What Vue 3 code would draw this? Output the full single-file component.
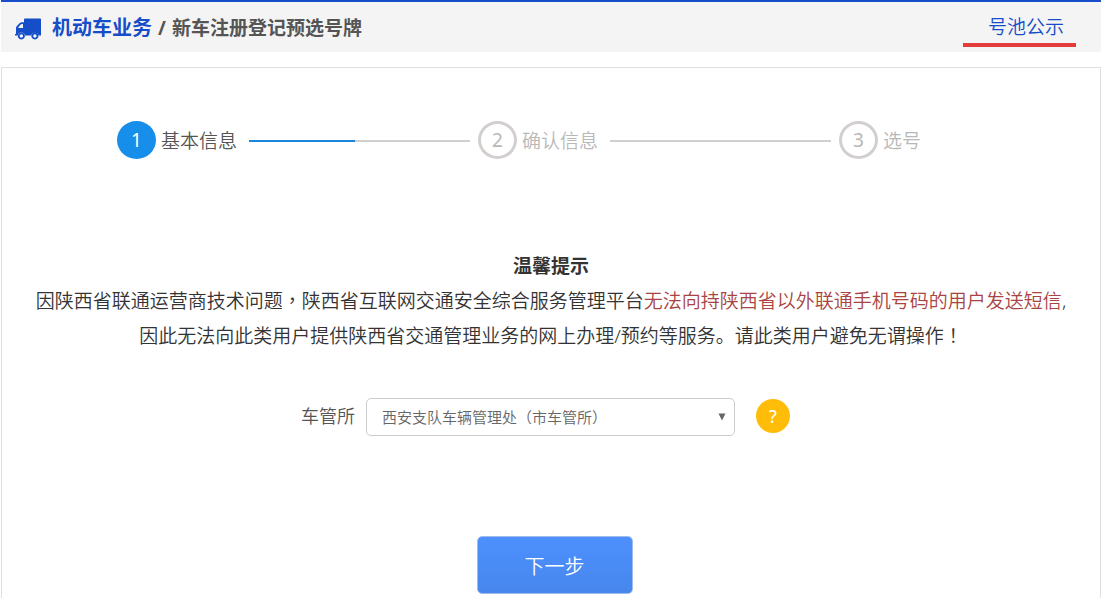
<script setup>
import { ref } from 'vue'

const steps = [
  { no: 1, label: '基本信息', active: true },
  { no: 2, label: '确认信息', active: false },
  { no: 3, label: '选号', active: false },
]
const offices = ['西安支队车辆管理处\uFF08市车管所\uFF09']
const office = ref(offices[0])
</script>

<template>
  <div class="page" lang="zh-CN">
    <header class="bar">
      <svg class="truck" viewBox="0 0 27 22" aria-hidden="true">
        <path fill-rule="evenodd" d="M10 1.500Q10 .5 11 .5H26Q27 .5 27 1.500V17.500H24.500A3.700 3.700 0 0 0 17.300 17.500H11A3.700 3.700 0 0 0 3.700 17.500H1V16H2V10Q2 9 2.700 8.300L5.500 5.200Q6.500 4.200 7.700 4.200H10ZM4.500 10H9V6H7.700Q7.200 6 6.800 6.400L4.500 9Z" />
        <path fill-rule="evenodd" d="M7.350 14.500a3.500 3.500 0 1 0 .01 0ZM7.350 16.300a1.700 1.700 0 1 1-.01 0ZM20.900 14.500a3.500 3.500 0 1 0 .01 0ZM20.900 16.300a1.700 1.700 0 1 1-.01 0Z" />
      </svg>
      <h1 class="title"><span class="section">机动车业务</span><span>/</span><span>新车注册登记预选号牌</span></h1>
      <a class="pool" href="#pool">号池公示</a>
    </header>

    <main class="card">
      <ol class="steps">
        <li v-for="s in steps" :key="s.no" class="step" :class="{ active: s.active }">
          <span class="num">{{ s.no }}</span>
          <span class="name">{{ s.label }}</span>
          <span v-if="s.no < steps.length" class="line"></span>
        </li>
      </ol>

      <section class="notice">
        <h2>温馨提示</h2>
        <p>因陕西省联通运营商技术问题<span class="mid" lang="zh-TW">&#xFF0C;</span>陕西省互联网交通安全综合服务管理平台<span class="warn">无法向持陕西省以外联通手机号码的用户发送短信</span>,</p>
        <p>因此无法向此类用户提供陕西省交通管理业务的网上办理/预约等服务。请此类用户避免无谓操作<span class="mid" lang="zh-TW">&#xFF01;</span></p>
      </section>

      <form class="form" @submit.prevent>
        <div class="field">
          <label for="office">车管所</label>
          <div class="select">
            <select id="office" v-model="office">
              <option v-for="o in offices" :key="o" :value="o">{{ o }}</option>
            </select>
            <svg class="arrow" viewBox="0 0 8 8" aria-hidden="true"><path d="M.5 .5H7.500L4 7.500Z" /></svg>
          </div>
          <button type="button" class="help">?</button>
        </div>
        <button type="submit" class="next">下一步</button>
      </form>
    </main>
  </div>
</template>

<style>
body {
  background: #fff;
}
</style>

<style scoped>
.page {
  box-sizing: border-box;
  display: flex;
  flex-direction: column;
  min-height: 100vh;
  padding: 0 3px 0 1px;
  font-family: "Noto Sans", "Noto Sans CJK SC", sans-serif;
  font-weight: 350;
  color: #333;
}
.bar {
  display: flex;
  align-items: center;
  height: 50px;
  padding: 0 25px 0 13px;
  border-top: 2px solid #164dc8;
  background: #f4f4f4;
}
.truck {
  width: 27px;
  height: 22px;
  margin: 4px 11px 0 0;
  fill: #164dc8;
}
.title {
  display: flex;
  align-items: baseline;
  gap: 6px;
  margin: 2px 0 0;
  font-size: 19px;
  line-height: 28px;
  font-weight: 700;
  color: #555;
}
.section {
  font-size: 20px;
  color: #164dc8;
}
.pool {
  margin-left: auto;
  align-self: flex-end;
  margin-bottom: 5px;
  padding: 0 12px 2px 25px;
  border-bottom: 4px solid #e23c3c;
  font-size: 19px;
  line-height: 28px;
  color: #164dc8;
  text-decoration: none;
}
.card {
  flex: 1;
  margin-top: 15px;
  padding: 53px 0 4px;
  border: 1px solid #dfdfdf;
  border-bottom: 0;
}
.steps {
  display: flex;
  margin: 0;
  padding: 0 179px 0 115px;
  list-style: none;
}
.step {
  display: flex;
  align-items: center;
  font-size: 19px;
  line-height: 28px;
  color: #b8b8b8;
}
.step:not(:last-child) {
  flex: 1;
}
.num {
  box-sizing: border-box;
  width: 39px;
  height: 38px;
  margin-right: 5px;
  border: 3px solid #d4cfcf;
  border-radius: 50%;
  font-size: 19px;
  line-height: 32px;
  font-weight: 400;
  text-align: center;
}
.name {
  margin-top: 2px;
}
.line {
  flex: 1;
  height: 2px;
  margin: 2px 8px 0 12px;
  background: #d0d0d0;
}
.active .name {
  color: #555;
}
.active .num {
  border-color: #168eea;
  background: #168eea;
  color: #fff;
}
.active .line {
  background: linear-gradient(to right, #1a86d9 48%, #d0d0d0 48%);
}
.notice {
  margin-top: 90px;
  text-align: center;
  font-size: 19px;
  line-height: 35px;
}
.notice h2 {
  margin: 0;
  font-size: 19px;
  font-weight: 700;
}
.notice p {
  margin: 0;
}
.mid {
  font-family: "Noto Sans CJK TC", sans-serif;
  line-height: 1;
}
.warn {
  color: #a94442;
}
.form {
  display: flex;
  flex-direction: column;
  align-items: center;
  margin-top: 44px;
}
.field {
  display: flex;
  align-items: center;
  margin-right: 11px;
}
.field label {
  margin: 0 11px 2px 0;
  font-size: 18px;
  line-height: 28px;
  color: #555;
}
.select {
  position: relative;
}
.select select {
  appearance: none;
  box-sizing: border-box;
  width: 369px;
  height: 38px;
  padding: 0 30px 0 15px;
  border: 1px solid #ccc;
  border-radius: 5px;
  background: #fff;
  font: inherit;
  font-size: 15px;
  color: #666;
}
.arrow {
  position: absolute;
  top: 15px;
  right: 9px;
  width: 8px;
  height: 8px;
  fill: #666;
  pointer-events: none;
}
.help {
  width: 34px;
  height: 34px;
  margin: 0 0 2px 21px;
  padding: 0;
  border: 0;
  border-radius: 50%;
  background: #ffbc08;
  font: inherit;
  font-size: 18px;
  font-weight: 400;
  color: #fff;
}
.next {
  width: 156px;
  height: 58px;
  margin: 100px 0 0 7px;
  border: 1px solid #9ebbee;
  border-radius: 5px;
  background: linear-gradient(#4d90fe, #4787ed);
  font: inherit;
  font-size: 20px;
  color: #fff;
}
</style>
